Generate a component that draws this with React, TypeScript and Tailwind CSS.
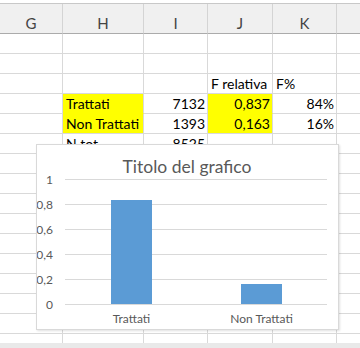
import React from "react";

type Cell = { t?: string; right?: boolean; yellow?: boolean; yellowBottom?: boolean };

const cols = ["G", "H", "I", "J", "K", ""];

const rows: Cell[][] = [
  [{}, {}, {}, {}, {}, {}],
  [{}, {}, {}, {}, {}, {}],
  [{}, {}, {}, { t: "F relativa" }, { t: "F%" }, {}],
  [{}, { t: "Trattati", yellow: true, yellowBottom: true }, { t: "7132", right: true }, { t: "0,837", right: true, yellow: true, yellowBottom: true }, { t: "84%", right: true }, {}],
  [{}, { t: "Non Trattati", yellow: true }, { t: "1393", right: true }, { t: "0,163", right: true, yellow: true }, { t: "16%", right: true }, {}],
  [{}, { t: "N tot" }, { t: "8525", right: true }, {}, {}, {}],
];
while (rows.length < 16) rows.push([{}, {}, {}, {}, {}, {}]);

function Chart() {
  const grid = [34, 59, 84, 109, 134, 159];
  const labels = ["1", "0,8", "0,6", "0,4", "0,2", "0"];
  return (
    <div className="absolute left-[36px] top-[144px] w-[303px] h-[186px] bg-white border border-[#d9d9d9] shadow-[1px_1px_2px_rgba(0,0,0,0.12)]">
      <svg width="301" height="184" className="block" style={{ fontFamily: "Lato, 'Liberation Sans', sans-serif" }}>
        <text x="150" y="28" textAnchor="middle" fontSize="17.5" fill="#595959">
          Titolo del grafico
        </text>
        {grid.map((y, i) => (
          <g key={i}>
            <line x1="28" x2="290" y1={y + 0.5} y2={y + 0.5} stroke="#d9d9d9" strokeWidth="1" />
            <text x="16" y={y + 4.5} textAnchor="end" fontSize="12" fill="#595959">
              {labels[i]}
            </text>
          </g>
        ))}
        <rect x="74" y="55" width="41" height="104" fill="#5b9bd5" />
        <rect x="204" y="139" width="41" height="20" fill="#5b9bd5" />
        <text x="94.5" y="178" textAnchor="middle" fontSize="12" fill="#595959">
          Trattati
        </text>
        <text x="224.5" y="178" textAnchor="middle" fontSize="12" fill="#595959">
          Non Trattati
        </text>
      </svg>
    </div>
  );
}

export default function App() {
  return (
    <div
      className="relative w-[360px] h-[348px] overflow-hidden bg-white flex flex-col"
      style={{ fontFamily: "Lato, 'Liberation Sans', sans-serif" }}
    >
      <div className="h-[3px] shrink-0" />
      <div className="flex-1 overflow-hidden border-t border-[#c8c8c8]">
        <div className="grid grid-cols-[63px_81px_64px_65px_64px_60px]">
          {cols.map((c, i) => (
            <div
              key={"h" + i}
              className="h-[30px] bg-[#f0f0f0] border-r border-b border-r-[#d4d4d4] border-b-[#ababab] flex items-end justify-center text-[15px] leading-[20px] text-[#444444]"
            >
              {c}
            </div>
          ))}
          {rows.map((r, ri) =>
            r.map((cell, ci) => (
              <div
                key={ri + "-" + ci}
                className={
                  "h-[20px] border-r border-b text-[14px] leading-[19px] text-black whitespace-nowrap overflow-hidden " +
                  (cell.right ? "text-right pr-[2px] " : "pl-[3px] ") +
                  (cell.yellow ? "bg-[#ffff00] border-r-[#d9d9d9] " : "border-r-[#d9d9d9] ") +
                  (cell.yellowBottom ? "border-b-[#ffff00]" : "border-b-[#d9d9d9]")
                }
              >
                {cell.t}
              </div>
            ))
          )}
        </div>
      </div>
      <div className="h-[5px] shrink-0 bg-[#e9e9e9]" />
      <Chart />
    </div>
  );
}
